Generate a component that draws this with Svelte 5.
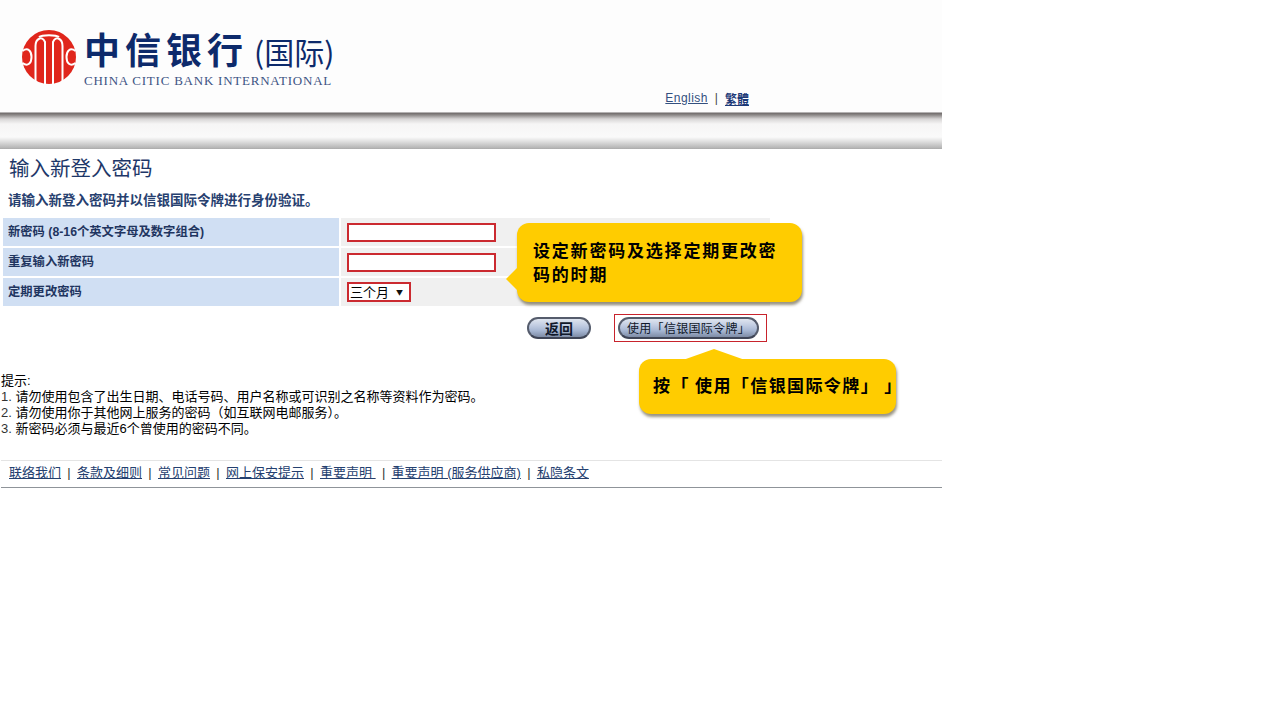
<script>
  const rows = [
    { label: '新密码 (8-16个英文字母及数字组合)', kind: 'input' },
    { label: '重复输入新密码', kind: 'input' },
    { label: '定期更改密码', kind: 'select' }
  ];
  const notes = [
    ['1.', '请勿使用包含了出生日期、电话号码、用户名称或可识别之名称等资料作为密码。'],
    ['2.', '请勿使用你于其他网上服务的密码（如互联网电邮服务）。'],
    ['3.', '新密码必须与最近6个曾使用的密码不同。']
  ];
  const links = ['联络我们', '条款及细则', '常见问题', '网上保安提示', '重要声明 ', '重要声明 (服务供应商)', '私隐条文'];
</script>

<div class="page">
  <header class="head">
    <div class="logo">
      <svg class="mark" width="56" height="56" viewBox="0 0 56 56" aria-hidden="true">
        <circle cx="28" cy="28" r="27" fill="#e0261c" />
        <g fill="none" stroke="#fff" stroke-width="2">
          <path d="M14.500 52 L14.500 17 C14.500 10 21 6 24 13 L24 56" />
          <path d="M41.500 52 L41.500 17 C41.500 10 35 6 32 13 L32 56" />
          <path d="M1.500 22 C7 18 10.500 22 10.500 28 C10.500 34 7 38 1.500 34" />
          <path d="M54.500 22 C49 18 45.500 22 45.500 28 C45.500 34 49 38 54.500 34" />
          <path d="M18 8 C21 5.500 35 5.500 38 8" />
        </g>
      </svg>
      <div class="brand">
        <div class="brand-cn">中信银行<span class="brand-intl">(国际)</span></div>
        <div class="brand-en">CHINA CITIC BANK INTERNATIONAL</div>
      </div>
    </div>
    <nav class="lang"><a href="#en">English</a><span class="bar">|</span><a class="trad" href="#tc">繁體</a></nav>
  </header>
  <div class="banner"></div>

  <main class="content">
    <h1>输入新登入密码</h1>
    <p class="intro">请输入新登入密码并以信银国际令牌进行身份验证。</p>

    <div class="form">
      {#each rows as row}
        <div class="label">{row.label}</div>
        <div class="field">
          {#if row.kind === 'input'}
            <span class="input"></span>
          {:else}
            <span class="select">三个月<span class="caret">▼</span></span>
          {/if}
        </div>
      {/each}
    </div>

    <div class="actions">
      <button class="pill back">返回</button>
      <span class="outline"><button class="pill token">使用「信银国际令牌」</button></span>
    </div>

    <div class="notes">
      <div>提示:</div>
      {#each notes as note}
        <div><span class="num">{note[0]}</span> {note[1]}</div>
      {/each}
    </div>

    <footer class="foot">
      {#each links as link, i}
        {#if i > 0}<span class="sep">|</span>{/if}
        <a href="#f">{link}</a>
      {/each}
    </footer>
  </main>

  <div class="tip tip-a">设定新密码及选择定期更改密码的时期</div>
  <div class="tip tip-b">按「 使用「信银国际令牌」 」</div>
</div>

<style>
  :global(body) {
    margin: 0;
    background: #fff;
  }
  .page {
    position: relative;
    width: 1280px;
    height: 720px;
    overflow: hidden;
    font-family: "Liberation Sans", "Noto Sans CJK SC", sans-serif;
    color: #000;
  }
  .head {
    position: relative;
    width: 942px;
    height: 112px;
    box-sizing: border-box;
    display: flex;
    justify-content: space-between;
    padding: 29px 193px 0 21px;
    background: #fdfdfd;
  }
  .logo {
    display: flex;
    gap: 7px;
    height: 58px;
  }
  .brand {
    display: flex;
    flex-direction: column;
  }
  .brand-cn {
    font-family: "Noto Sans CJK SC", sans-serif;
    font-size: 36px;
    line-height: 38px;
    font-weight: 700;
    letter-spacing: 5px;
    color: #0d2a6b;
    white-space: nowrap;
  }
  .brand-intl {
    font-size: 30px;
    font-weight: 400;
    letter-spacing: 0;
    margin-left: 6px;
  }
  .brand-en {
    font-family: "Liberation Serif", serif;
    font-size: 13px;
    line-height: 16px;
    margin-top: 3px;
    letter-spacing: 0.770px;
    color: #3d5484;
    white-space: nowrap;
  }
  .lang {
    align-self: flex-end;
    display: flex;
    align-items: center;
    gap: 7px;
    height: 18px;
    margin-bottom: 5px;
    font-size: 12px;
  }
  .lang a {
    color: #33507f;
    text-decoration: underline;
    letter-spacing: 0.450px;
  }
  .lang .trad {
    color: #1d3a78;
    font-weight: 700;
    letter-spacing: 0;
  }
  .bar {
    color: #444;
  }
  .banner {
    width: 942px;
    height: 37px;
    background: linear-gradient(to bottom, #fafafa 0, #6f6a6a 1px, #8d8988 3px, #d8d6d6 7px, #f6f5f5 12px, #fafafa 25px, #dcdcdc 30px, #b5b5b5 36px, #a8a8a8 37px);
  }
  .content {
    width: 942px;
    background: #fff;
  }
  h1 {
    margin: 0;
    padding: 5px 0 0 9px;
    font-family: "Noto Sans CJK SC", sans-serif;
    font-size: 20.500px;
    line-height: 26px;
    font-weight: 400;
    color: #1e3768;
  }
  .intro {
    margin: 0;
    padding: 9px 0 0 8px;
    height: 35px;
    box-sizing: border-box;
    font-family: "Noto Sans CJK SC", sans-serif;
    font-size: 13.500px;
    line-height: 20px;
    font-weight: 700;
    color: #27406f;
  }
  .form {
    display: grid;
    grid-template-columns: 336px 429px;
    grid-template-rows: 28px 28px 28px;
    gap: 2px;
    width: 767px;
    margin: 3px 0 0 3px;
  }
  .label {
    background: #d0dff3;
    padding: 6px 0 0 5px;
    font-family: "Liberation Sans", "Noto Sans CJK SC", sans-serif;
    font-size: 12.300px;
    line-height: 17px;
    font-weight: 700;
    color: #1f3560;
    box-sizing: border-box;
  }
  .field {
    background: #f0f0f0;
    padding: 5px 0 0 6px;
    box-sizing: border-box;
  }
  .input {
    display: block;
    width: 149px;
    height: 19px;
    box-sizing: border-box;
    border: 2px solid #cb2a30;
    background: #fff;
  }
  .select {
    display: flex;
    align-items: center;
    justify-content: space-between;
    width: 64px;
    height: 20px;
    margin-top: -1px;
    padding: 0 6px 0 1px;
    box-sizing: border-box;
    border: 2px solid #cb2a30;
    background: #fff;
    font-family: "Noto Sans CJK SC", sans-serif;
    font-size: 13px;
    line-height: 16px;
  }
  .caret {
    font-size: 7px;
    color: #111;
  }
  .actions {
    display: flex;
    align-items: center;
    gap: 23px;
    height: 28px;
    margin: 8px 0 0 527px;
  }
  .outline {
    display: flex;
    align-items: center;
    width: 153px;
    height: 28px;
    padding-left: 3px;
    box-sizing: border-box;
    border: 1px solid #c8232c;
  }
  .pill {
    height: 22px;
    padding: 0;
    border: 2px solid #555c6c;
    border-bottom-color: #3f4556;
    border-radius: 11px;
    background: linear-gradient(to bottom, #dfe5ef 0, #c2cde2 35%, #a6b6d2 65%, #7e8ca6 100%);
    font-family: "Noto Sans CJK SC", sans-serif;
    font-size: 12px;
    line-height: 16px;
    color: #10182a;
    box-sizing: border-box;
  }
  .back {
    width: 64px;
    font-weight: 700;
    font-size: 14px;
  }
  .token {
    width: 141px;
    white-space: nowrap;
    letter-spacing: 0.300px;
  }
  .notes {
    margin-top: 31px;
    padding-left: 1px;
    font-family: "Liberation Sans", "Noto Sans CJK SC", sans-serif;
    font-size: 13px;
    line-height: 16px;
    color: #000;
  }
  .num {
    color: #333;
  }
  .foot {
    display: flex;
    align-items: center;
    gap: 6.300px;
    height: 28px;
    margin: 23px 0 0 1px;
    padding: 0 0 2px 8px;
    box-sizing: border-box;
    border-top: 1px solid #e4e4e4;
    border-bottom: 1px solid #8f9499;
    font-family: "Liberation Sans", "Noto Sans CJK SC", sans-serif;
    font-size: 13px;
    line-height: 16px;
    white-space: pre;
  }
  .foot a {
    color: #24406f;
    text-decoration: underline;
  }
  .sep {
    color: #333;
  }
  .tip {
    position: absolute;
    box-sizing: border-box;
    background: #ffcc00;
    border-radius: 12px;
    box-shadow: 1px 3px 3px rgba(70, 60, 30, 0.55);
    font-family: "Noto Sans CJK SC", sans-serif;
    font-weight: 700;
    font-size: 17px;
    line-height: 24px;
    letter-spacing: 1.800px;
    color: #000;
  }
  .tip::before {
    content: "";
    position: absolute;
    background: #ffcc00;
  }
  .tip-a {
    left: 517px;
    top: 223px;
    width: 285px;
    height: 79px;
    padding: 15px 16px 0 16px;
  }
  .tip-a::before {
    left: -11px;
    top: 44px;
    width: 12px;
    height: 24px;
    clip-path: polygon(100% 0, 0 50%, 100% 100%);
  }
  .tip-b {
    left: 639px;
    top: 359px;
    width: 257px;
    height: 55px;
    padding: 14px 0 0 14px;
    white-space: nowrap;
    letter-spacing: 1.400px;
  }
  .tip-b::before {
    left: 44px;
    top: -10px;
    width: 62px;
    height: 11px;
    clip-path: polygon(0 100%, 50% 0, 100% 100%);
  }
</style>
